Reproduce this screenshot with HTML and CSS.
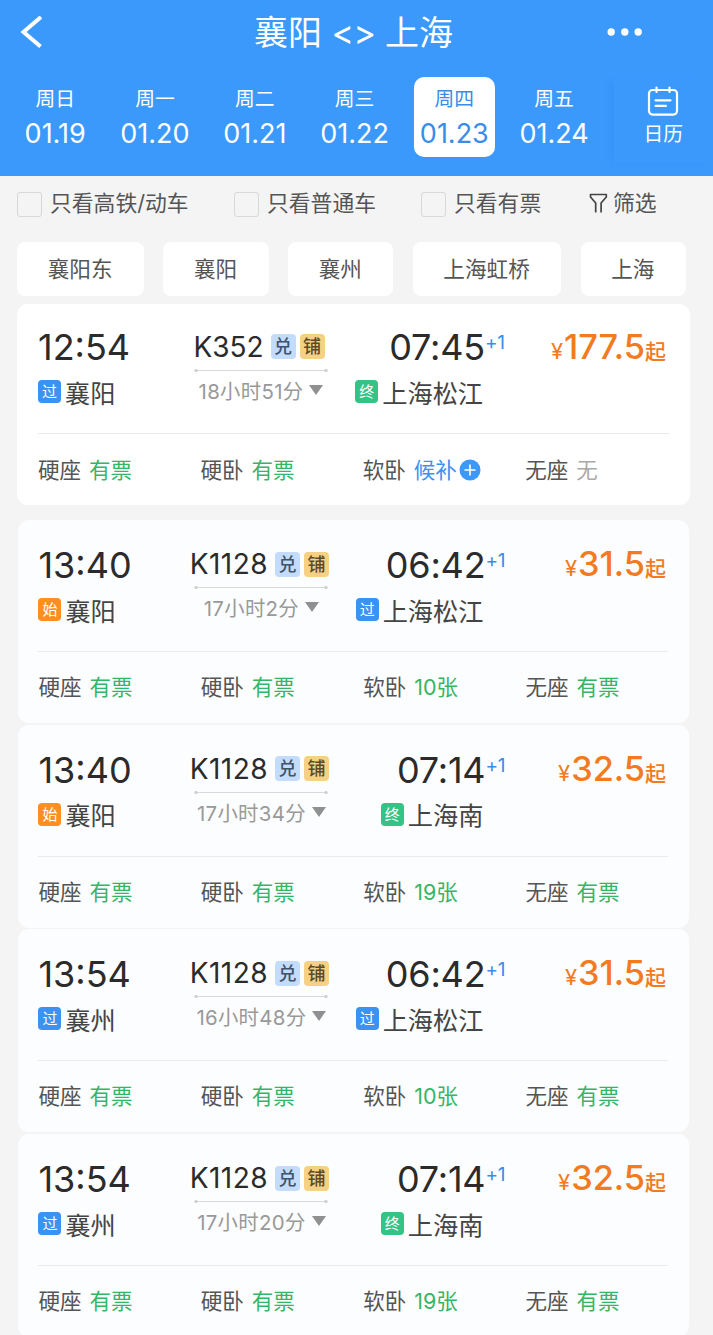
FILE: index.html
```html
<!DOCTYPE html>
<html lang="zh-CN">
<head>
	<meta charset="UTF-8">
	<title>襄阳 - 上海</title>
	<link rel="stylesheet" href="styles.css">
</head>
<body>
	<div class="header">
		<div class="titlebar">
			<svg class="back" width="22" height="32" viewBox="0 0 22 32"><path d="M21 1L3.500 16l17 14.500" fill="none" stroke="#fff" stroke-width="4"/></svg>
			<h1>襄阳 <span>&lt;&gt;</span> 上海</h1>
			<svg class="more" width="36" height="8" viewBox="0 0 36 8" fill="#fff"><circle cx="4.2" cy="4" r="3.7"/><circle cx="17.8" cy="4" r="3.7"/><circle cx="31.2" cy="4" r="3.7"/></svg>
		</div>
		<div class="dates">
			<div class="day"><span>周日</span><b>01.19</b></div>
			<div class="day"><span>周一</span><b>01.20</b></div>
			<div class="day"><span>周二</span><b>01.21</b></div>
			<div class="day"><span>周三</span><b>01.22</b></div>
			<div class="day active"><span>周四</span><b>01.23</b></div>
			<div class="day"><span>周五</span><b>01.24</b></div>
			<div class="calendar">
				<svg width="32" height="31" viewBox="0 0 32 31" fill="none" stroke="#fff" stroke-width="2.2" stroke-linecap="round"><rect x="2" y="4" width="28" height="24.6" rx="3.5"/><path d="M9.500 1.500v4.500M22.500 1.500v4.500M8.500 14.300h15M8.500 19.800h10.500"/></svg>
				<span>日历</span>
			</div>
		</div>
	</div>

	<div class="filters">
		<label><i class="box"></i>只看高铁/动车</label>
		<label><i class="box"></i>只看普通车</label>
		<label><i class="box"></i>只看有票</label>
		<div class="sift">
			<svg width="19" height="21" viewBox="0 0 19 21" fill="none" stroke="#444" stroke-width="1.7" stroke-linejoin="round"><path d="M6.700 19.500V10L1.500 4V1.500h15.800V4l-5.200 6v9.500"/></svg>筛选
		</div>
	</div>

	<div class="stations">
		<span>襄阳东</span>
		<span>襄阳</span>
		<span>襄州</span>
		<span>上海虹桥</span>
		<span>上海</span>
	</div>

	<!-- main train -->
	<div class="card first">
		<div class="info">
			<div class="from">
				<div class="time">12:54</div>
				<div class="station"><i class="tag pass">过</i>襄阳</div>
			</div>
			<div class="train">
				<div class="number">K352<i class="mark dui">兑</i><i class="mark pu">铺</i></div>
				<div class="line"></div>
				<div class="duration">18小时51分<i class="arrow"></i></div>
			</div>
			<div class="to">
				<div class="time">07:45<sup>+1</sup></div>
				<div class="station"><i class="tag end">终</i>上海松江</div>
			</div>
			<div class="price"><small>¥</small>177.5<em>起</em></div>
		</div>
		<div class="seats">
			<div>硬座<span class="yes">有票</span></div>
			<div>硬卧<span class="yes">有票</span></div>
			<div>软卧<span class="wait">候补<svg width="22" height="22" viewBox="0 0 22 22"><circle cx="11" cy="11" r="10.500" fill="#3b99fc"/><path d="M5.500 11h11M11 5.500v11" stroke="#fff" stroke-width="1.600"/></svg></span></div>
			<div>无座<span class="none">无</span></div>
		</div>
	</div>

	<!-- nearby stations -->
	<div class="card">
		<div class="info">
			<div class="from">
				<div class="time">13:40</div>
				<div class="station"><i class="tag start">始</i>襄阳</div>
			</div>
			<div class="train">
				<div class="number">K1128<i class="mark dui">兑</i><i class="mark pu">铺</i></div>
				<div class="line"></div>
				<div class="duration">17小时2分<i class="arrow"></i></div>
			</div>
			<div class="to">
				<div class="time">06:42<sup>+1</sup></div>
				<div class="station"><i class="tag pass">过</i>上海松江</div>
			</div>
			<div class="price"><small>¥</small>31.5<em>起</em></div>
		</div>
		<div class="seats">
			<div>硬座<span class="yes">有票</span></div>
			<div>硬卧<span class="yes">有票</span></div>
			<div>软卧<span class="yes">10张</span></div>
			<div>无座<span class="yes">有票</span></div>
		</div>
	</div>

	<div class="card">
		<div class="info">
			<div class="from">
				<div class="time">13:40</div>
				<div class="station"><i class="tag start">始</i>襄阳</div>
			</div>
			<div class="train">
				<div class="number">K1128<i class="mark dui">兑</i><i class="mark pu">铺</i></div>
				<div class="line"></div>
				<div class="duration">17小时34分<i class="arrow"></i></div>
			</div>
			<div class="to">
				<div class="time">07:14<sup>+1</sup></div>
				<div class="station"><i class="tag end">终</i>上海南</div>
			</div>
			<div class="price"><small>¥</small>32.5<em>起</em></div>
		</div>
		<div class="seats">
			<div>硬座<span class="yes">有票</span></div>
			<div>硬卧<span class="yes">有票</span></div>
			<div>软卧<span class="yes">19张</span></div>
			<div>无座<span class="yes">有票</span></div>
		</div>
	</div>

	<div class="card">
		<div class="info">
			<div class="from">
				<div class="time">13:54</div>
				<div class="station"><i class="tag pass">过</i>襄州</div>
			</div>
			<div class="train">
				<div class="number">K1128<i class="mark dui">兑</i><i class="mark pu">铺</i></div>
				<div class="line"></div>
				<div class="duration">16小时48分<i class="arrow"></i></div>
			</div>
			<div class="to">
				<div class="time">06:42<sup>+1</sup></div>
				<div class="station"><i class="tag pass">过</i>上海松江</div>
			</div>
			<div class="price"><small>¥</small>31.5<em>起</em></div>
		</div>
		<div class="seats">
			<div>硬座<span class="yes">有票</span></div>
			<div>硬卧<span class="yes">有票</span></div>
			<div>软卧<span class="yes">10张</span></div>
			<div>无座<span class="yes">有票</span></div>
		</div>
	</div>

	<div class="card">
		<div class="info">
			<div class="from">
				<div class="time">13:54</div>
				<div class="station"><i class="tag pass">过</i>襄州</div>
			</div>
			<div class="train">
				<div class="number">K1128<i class="mark dui">兑</i><i class="mark pu">铺</i></div>
				<div class="line"></div>
				<div class="duration">17小时20分<i class="arrow"></i></div>
			</div>
			<div class="to">
				<div class="time">07:14<sup>+1</sup></div>
				<div class="station"><i class="tag end">终</i>上海南</div>
			</div>
			<div class="price"><small>¥</small>32.5<em>起</em></div>
		</div>
		<div class="seats">
			<div>硬座<span class="yes">有票</span></div>
			<div>硬卧<span class="yes">有票</span></div>
			<div>软卧<span class="yes">19张</span></div>
			<div>无座<span class="yes">有票</span></div>
		</div>
	</div>
</body>
</html>
```
FILE: styles.css
```css
* {
  box-sizing: border-box;
}

body {
  margin: 0;
  height: 1335px;
  overflow: hidden;
  background-color: #f4f4f4;
  color: #333;
  font-family: Inter, "Noto Sans CJK SC", sans-serif;
  white-space: nowrap;
}

i, em {
  font-style: normal;
}

/* Blue top area */
.header {
  height: 176px;
  background-color: #3b99fc;
  color: white;
}

.titlebar {
  display: grid;
  grid-template-columns: 80px 547px 86px;
  align-items: center;
  height: 64px;
}

.titlebar h1 {
  margin: 0;
  font-size: 34px;
  font-weight: 400;
  line-height: 66px;
  text-align: center;
}

.titlebar h1 span {
  letter-spacing: -0.5px;
}

.back {
  margin: -3px 0 0 20px;
}

.more {
  margin-left: -20px;
  margin-top: -2px;
}

.dates {
  display: flex;
  padding: 13px 0 0 15px;
}

.day {
  display: flex;
  flex-direction: column;
  align-items: center;
  width: 80.4px;
  height: 80.4px;
  margin-right: 19.4px;
  padding-top: 7px;
  border-radius: 10px;
}

.day span, .calendar span {
  font-size: 19.8px;
  line-height: 31px;
}

.day b {
  font-size: 27px;
  font-weight: 400;
  line-height: 38px;
}

.day.active {
  background-color: white;
  color: #3b8cea;
}

.calendar {
  display: flex;
  flex-direction: column;
  align-items: center;
  flex: 1;
  height: 86px;
  padding-top: 9px;
  box-shadow: -6px 2px 8px -4px rgba(30, 100, 200, 0.15);
}

.calendar span {
  line-height: 34px;
}

/* Filter checkboxes */
.filters {
  display: grid;
  grid-template-columns: 217px 187px 168px 1fr;
  align-items: center;
  height: 56px;
  padding-left: 17px;
  color: #555;
  font-size: 21.8px;
  line-height: 28px;
}

.filters label, .sift {
  display: flex;
  align-items: center;
  margin-top: -2px;
}

.box {
  width: 25px;
  height: 25px;
  margin: 2px 8px 0 0;
  border: 1.5px solid #d8d8d8;
  border-radius: 3px;
}

.sift svg {
  margin-right: 5px;
}

/* Station chips */
.stations {
  display: flex;
  gap: 19.3px;
  padding: 10px 17px 8px;
}

.stations span {
  padding: 0 31.5px 0 30.7px;
  border-radius: 8px;
  background-color: white;
  color: #555;
  font-size: 21.6px;
  line-height: 54px;
}

/* Train cards */
.card {
  width: 671px;
  height: 203px;
  margin: 0 0 1.7px 18px;
  padding: 22px 21px 0 20.4px;
  border-radius: 11px;
  background-color: #fcfdfe;
}

.card.first {
  width: 673px;
  height: 201px;
  margin: 0 0 15px 17px;
  padding: 20px 21px 0;
  background-color: white;
}

.info {
  display: grid;
  grid-template-columns: 156px 134px 155px 1fr;
  height: 110px;
  border-bottom: 1.5px solid #ebebed;
}

.time {
  color: #2b2b2b;
  font-size: 36px;
  line-height: 46px;
}

.to .time {
  position: relative;
  margin-right: -2px;
  letter-spacing: -0.2px;
  text-align: right;
}

.time sup {
  position: absolute;
  left: 100%;
  top: -1px;
  color: #3b8cea;
  font-size: 19px;
  line-height: 40px;
}

.station {
  display: flex;
  align-items: center;
  height: 43px;
  color: #444;
  font-size: 25.2px;
}

.to .station {
  justify-content: flex-end;
}

.tag {
  width: 23px;
  height: 23px;
  margin: 0 4px 0 0;
  border-radius: 4px;
  color: white;
  font-size: 15px;
  line-height: 23px;
  text-align: center;
}

.tag.pass { background-color: #3b92f2; }
.tag.start { background-color: #ff8e20; }
.tag.end { background-color: #33c384; }

.number {
  display: flex;
  align-items: center;
  justify-content: center;
  height: 45px;
  margin: 0 -8px 0 -12px;
  color: #2b2b2b;
  font-size: 28px;
}

.mark {
  flex-shrink: 0;
  width: 25px;
  height: 25px;
  margin-left: 4px;
  border-radius: 4px;
  font-size: 18px;
  font-weight: 500;
  line-height: 25px;
  text-align: center;
}

.mark.dui {
  margin-left: 7px;
  background-color: #c3dcfc;
  color: #41536b;
}

.mark.pu {
  background-color: #f6d184;
  color: #5c4a28;
}

/* thin line with a dot at each end */
.line {
  height: 3px;
  border-radius: 2px;
  background: radial-gradient(circle at 2px 1.5px, #d2d2d4 1.5px, transparent 2px),
    radial-gradient(circle at 132px 1.5px, #d2d2d4 1.5px, transparent 2px),
    linear-gradient(#d9d9db, #d9d9db) 0 1px / 100% 1px no-repeat;
}

.card:not(.first) .number {
  height: 44px;
  letter-spacing: 0.5px;
}

.duration {
  display: flex;
  align-items: center;
  justify-content: center;
  height: 36px;
  color: #999;
  font-size: 20.4px;
  letter-spacing: 0.3px;
}

.arrow {
  margin-left: 6px;
  border: 7px solid transparent;
  border-top: 10px solid #909090;
  border-bottom: 0;
}

.price {
  padding-right: 3px;
  color: #f27a20;
  font-size: 34.3px;
  font-weight: 500;
  line-height: 46px;
  text-align: right;
}

.card:not(.first) .price {
  padding-right: 2px;
  line-height: 44px;
}

.price small {
  margin-right: 1px;
  font-size: 22px;
  font-weight: 400;
}

.price em {
  font-size: 21px;
}

.seats {
  display: grid;
  grid-template-columns: repeat(4, 162.4px);
  height: 70px;
  color: #555;
  font-size: 21.5px;
  line-height: 71px;
}

.card.first .seats {
  line-height: 73px;
}

.seats span {
  margin-left: 8px;
}

.seats .yes { color: #35b566; }
.seats .wait { color: #3b92f2; }
.seats .none { color: #aaa; }

.wait svg {
  margin-left: 2px;
  vertical-align: -3px;
}
```
